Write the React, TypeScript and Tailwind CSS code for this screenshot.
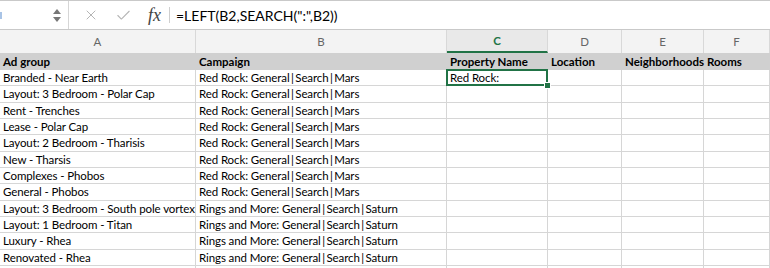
import { X, Check } from "lucide-react";

const cols = [
  { key: "A", w: "w-[196px]" },
  { key: "B", w: "w-[251px]" },
  { key: "C", w: "w-[101px]" },
  { key: "D", w: "w-[74px]" },
  { key: "E", w: "w-[82px]" },
  { key: "F", w: "w-[66px]" },
];

const headers = ["Ad group", "Campaign", "Property Name", "Location", "Neighborhoods", "Rooms"];

const rows: [string, string][] = [
  ["Branded - Near Earth", "Red Rock: General|Search|Mars"],
  ["Layout: 3 Bedroom - Polar Cap", "Red Rock: General|Search|Mars"],
  ["Rent - Trenches", "Red Rock: General|Search|Mars"],
  ["Lease - Polar Cap", "Red Rock: General|Search|Mars"],
  ["Layout: 2 Bedroom - Tharisis", "Red Rock: General|Search|Mars"],
  ["New - Tharsis", "Red Rock: General|Search|Mars"],
  ["Complexes - Phobos", "Red Rock: General|Search|Mars"],
  ["General - Phobos", "Red Rock: General|Search|Mars"],
  ["Layout: 3 Bedroom - South pole vortex", "Rings and More: General|Search|Saturn"],
  ["Layout: 1 Bedroom - Titan", "Rings and More: General|Search|Saturn"],
  ["Luxury - Rhea", "Rings and More: General|Search|Saturn"],
  ["Renovated - Rhea", "Rings and More: General|Search|Saturn"],
  ["", ""],
];

// pipes in the campaign names get a bit of air, like the sheet font draws them
const Campaign = ({ text }: { text: string }) => {
  const parts = text.split("|");
  return (
    <>
      {parts.map((p, i) => (
        <span key={i}>
          {i > 0 && <span className="mx-[1.5px]">|</span>}
          {p}
        </span>
      ))}
    </>
  );
};

const FormulaBar = () => (
  <div className="flex h-[30px] items-stretch border-t border-b border-[#c9c9c9] bg-white">
    <div className="relative flex w-[69px] items-center border-r border-[#d6d6d6]">
      <div className="h-[7px] w-[2px] bg-[#a9c4e6]" />
      <div className="absolute right-[7px] top-[8px] flex flex-col items-center gap-[3px]">
        <span className="block h-0 w-0 border-x-[4px] border-b-[5px] border-x-transparent border-b-[#777]" />
        <span className="block h-0 w-0 border-x-[4px] border-t-[5px] border-x-transparent border-t-[#777]" />
      </div>
    </div>
    <div className="flex items-center">
      <X className="ml-[14px] h-[16px] w-[16px] text-[#b5b5b5]" strokeWidth={1.5} />
      <Check className="ml-[16px] h-[17px] w-[17px] text-[#b5b5b5]" strokeWidth={1.5} />
      <span className="ml-[16px] font-['Liberation_Serif',serif] text-[18px] italic text-[#444]">fx</span>
      <span className="ml-[8px] h-[16px] w-px bg-[#cfcfcf]" />
      <span className="ml-[6px] text-[14px] text-black">=LEFT(B2,SEARCH(":",B2))</span>
    </div>
  </div>
);

export default function App() {
  return (
    <div className="h-[268px] w-[770px] overflow-hidden bg-white font-['Lato',sans-serif] text-black">
      <FormulaBar />
      <div className="flex h-[23px] bg-[#f3f3f3]">
        {cols.map((c) => (
          <div
            key={c.key}
            className={`${c.w} flex items-center justify-center border-r border-[#d8d8d8] text-[11.5px] ${
              c.key === "C"
                ? "border-b-2 border-b-[#217346] bg-[#e9e9e9] font-bold text-[#217346]"
                : "text-[#666]"
            }`}
          >
            {c.key}
          </div>
        ))}
      </div>
      <div className="flex h-[17px] bg-[#d0d0d0]">
        {cols.map((c, i) => (
          <div key={c.key} className={`${c.w} flex items-center px-[3px] text-[11.5px] font-bold whitespace-nowrap`}>
            {headers[i]}
          </div>
        ))}
      </div>
      {rows.map((r, ri) => (
        <div key={ri} className="flex h-[16.33px]">
          {cols.map((c, ci) => (
            <div
              key={c.key}
              className={`${c.w} relative flex items-center border-r border-b border-[#d6d6d6] px-[3px] text-[11.5px] tracking-[-0.1px] whitespace-nowrap`}
            >
              {ci === 0 && r[0]}
              {ci === 1 && <Campaign text={r[1]} />}
              {ci === 2 && ri === 0 && "Red Rock:"}
              {ci === 2 && ri === 0 && (
                <>
                  <div className="pointer-events-none absolute -left-px -top-px -right-px -bottom-px border-2 border-[#217346]" />
                  <div className="absolute -bottom-[4px] -right-[4px] z-10 h-[7px] w-[7px] border border-white bg-[#217346]" />
                </>
              )}
            </div>
          ))}
        </div>
      ))}
    </div>
  );
}
